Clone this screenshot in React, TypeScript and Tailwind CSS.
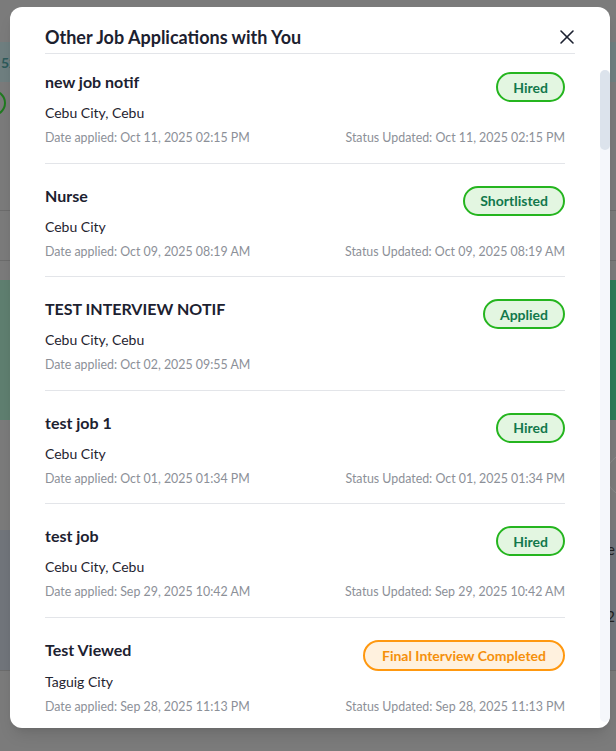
import { X } from "lucide-react";

type Status = "Hired" | "Shortlisted" | "Applied" | "Final Interview Completed";

type Application = {
  title: string;
  location: string;
  appliedAt: string;
  updatedAt?: string;
  status: Status;
};

const applications: Application[] = [
  { title: "new job notif", location: "Cebu City, Cebu", appliedAt: "Oct 11, 2025 02:15 PM", updatedAt: "Oct 11, 2025 02:15 PM", status: "Hired" },
  { title: "Nurse", location: "Cebu City", appliedAt: "Oct 09, 2025 08:19 AM", updatedAt: "Oct 09, 2025 08:19 AM", status: "Shortlisted" },
  { title: "TEST INTERVIEW NOTIF", location: "Cebu City, Cebu", appliedAt: "Oct 02, 2025 09:55 AM", status: "Applied" },
  { title: "test job 1", location: "Cebu City", appliedAt: "Oct 01, 2025 01:34 PM", updatedAt: "Oct 01, 2025 01:34 PM", status: "Hired" },
  { title: "test job", location: "Cebu City, Cebu", appliedAt: "Sep 29, 2025 10:42 AM", updatedAt: "Sep 29, 2025 10:42 AM", status: "Hired" },
  { title: "Test Viewed", location: "Taguig City", appliedAt: "Sep 28, 2025 11:13 PM", updatedAt: "Sep 28, 2025 11:13 PM", status: "Final Interview Completed" }
];

function StatusBadge({ status }: { status: Status }) {
  const orange = status === "Final Interview Completed";
  return (
    <span
      className={
        orange
          ? "mt-[2px] inline-flex h-[31px] shrink-0 items-center rounded-full border-2 border-[#ff980f] bg-[#fff1de] px-[17px] text-[14px] font-bold text-[#f5900c]"
          : "mt-[2px] inline-flex h-[30px] shrink-0 items-center rounded-full border-2 border-[#25b51f] bg-[#e3f6e1] px-[15px] text-[14px] font-bold text-[#12784c]"
      }
    >
      {status}
    </span>
  );
}

function ApplicationRow({ item, first }: { item: Application; first: boolean }) {
  return (
    <div className={first ? "border-b border-[#e3e5e9] pt-[16px] pb-[16.5px]" : "border-b border-[#e3e5e9] pt-[20px] pb-[16.5px]"}>
      <div className="flex items-start justify-between gap-4">
        <p className="text-[16px] leading-[24px] font-bold text-[#1c2130]">{item.title}</p>
        <StatusBadge status={item.status} />
      </div>
      <p className="mt-[1px] text-[14px] leading-[20px] text-[#1f2430]">{item.location}</p>
      <div className="mt-[7px] flex justify-between text-[12.4px] leading-[16px] text-[#8c9098]">
        <span>Date applied: {item.appliedAt}</span>
        {item.updatedAt ? <span>Status Updated: {item.updatedAt}</span> : null}
      </div>
    </div>
  );
}

function PageBehind() {
  return (
    <div className="flex h-[751px] flex-col bg-[#7b7b7b]">
      <div className="h-[42px]" />
      <div className="flex h-[40px] items-center overflow-hidden bg-[#6f7f80] text-[14px] font-bold text-[#2d5a5a]">
        <span className="pl-[1px] [clip-path:inset(0_0_0_0)]">52</span>
      </div>
      <div className="h-[8px]" />
      <div className="-ml-[20px] h-[26px] w-[26px] rounded-full border-2 border-[#1f7a1f]" />
      <div className="h-[94px]" />
      <div className="h-[50px] border-t border-[#6c6c6c]" />
      <div className="h-[20px] border-t border-[#6c6c6c]" />
      <div className="flex h-[140px]">
        <div className="flex-1 bg-[#5f7f70]" />
        <div className="w-[20px] bg-[#2f7a57]" />
      </div>
      <div className="flex h-[110px] items-center justify-end">
        <div className="-mr-[40px] h-[44px] w-[50px] rounded-full border border-[#8a8a8a]" />
      </div>
      <div className="flex h-[140px] flex-col items-end bg-[#71757b] pt-[8px] pr-[1px] text-[15px] text-[#222]">
        <span>e</span>
        <span className="mt-[44px]">2</span>
      </div>
      <div className="flex-1 border-t border-[#6c6c6c]" />
    </div>
  );
}

export default function App() {
  return (
    <div className="relative h-[751px] overflow-hidden" style={{ fontFamily: "Lato, 'Noto Sans', sans-serif" }}>
      <PageBehind />
      <div className="absolute inset-0">
        <div className="absolute top-[7px] left-[10px] flex h-[721px] w-[600px] flex-col overflow-hidden rounded-xl bg-white shadow-lg">
          <div className="mx-[35px] flex items-center justify-between border-b border-[#e3e5e9] pt-[16px] pb-[2px]">
            <h2 className="text-[18px] leading-[28px] font-bold text-[#1c2130]">Other Job Applications with You</h2>
            <button type="button" aria-label="Close" className="-mr-[4px] text-[#1c2130]">
              <X size={24} strokeWidth={1.6} />
            </button>
          </div>
          <div className="relative flex-1">
            <div className="h-full overflow-y-auto pr-[45px] pl-[35px] [scrollbar-width:none]">
              {applications.map((item, i) => (
                <ApplicationRow first={i === 0} item={item} key={item.title} />
              ))}
            </div>
            {/* scrollbar */}
            <div className="absolute top-[16px] right-0 bottom-[10px] w-[10px] rounded-full bg-[#f5f7fb]">
              <div className="h-[80px] w-full rounded-full bg-[#dce3ec]" />
            </div>
          </div>
        </div>
      </div>
    </div>
  );
}
